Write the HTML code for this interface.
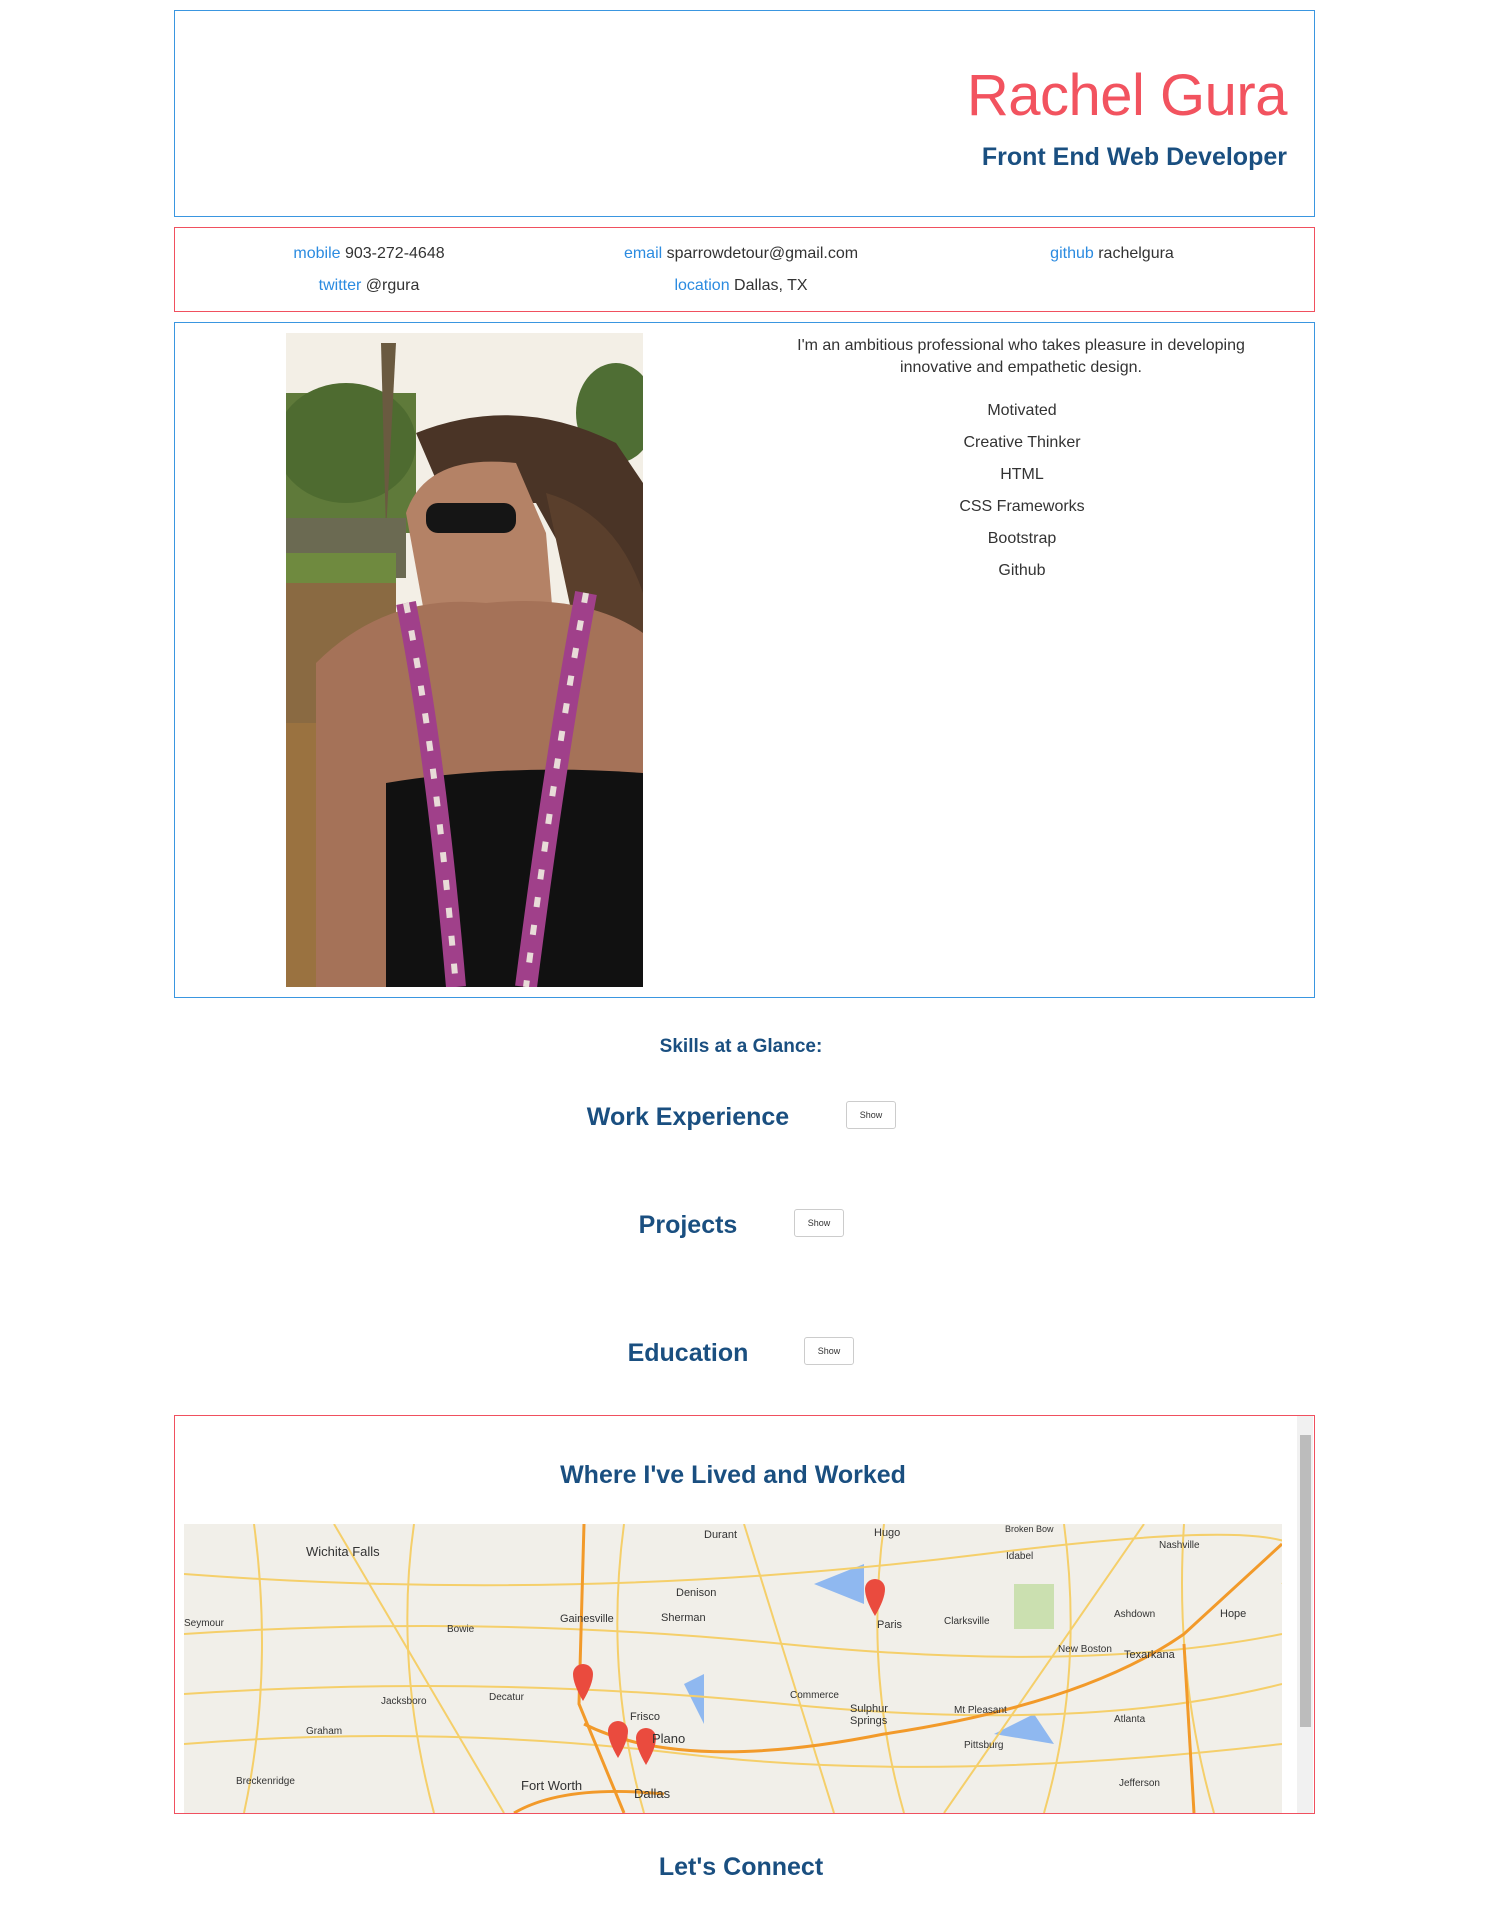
<!DOCTYPE html>
<html><head><meta charset="utf-8"><style>
*{box-sizing:border-box;margin:0;padding:0}
body{width:1487px;height:1918px;background:#fff;font-family:"Liberation Sans",sans-serif;position:relative;overflow:hidden;color:#333}
.abs{position:absolute}
.box{position:absolute;left:174px;width:1141px;border:1px solid #3a96e0}
.red{border-color:#f0505f}
.navy{color:#1a4f80;font-weight:bold}
.lk{color:#2b8be0}
.c{position:absolute;text-align:center;font-size:16px;white-space:nowrap;transform:translateX(-50%)}
.btn{position:absolute;width:50px;height:28px;border:1px solid #ccc;border-radius:3px;font-size:9px;text-align:center;line-height:26px;color:#333;background:#fff}
</style></head><body>
<div class="box" style="top:10px;height:207px"></div>
<div class="abs" style="right:200px;top:62px;font-size:58px;color:#f2535f;letter-spacing:-0.5px">Rachel Gura</div>
<div class="abs navy" style="right:200px;top:143px;font-size:25px">Front End Web Developer</div>

<div class="box red" style="top:227px;height:85px"></div>
<div class="c" style="left:369px;top:245px"><span class="lk">mobile</span> 903-272-4648</div>
<div class="c" style="left:741px;top:245px"><span class="lk">email</span> sparrowdetour@gmail.com</div>
<div class="c" style="left:1112px;top:245px"><span class="lk">github</span> rachelgura</div>
<div class="c" style="left:369px;top:277px"><span class="lk">twitter</span> @rgura</div>
<div class="c" style="left:741px;top:277px"><span class="lk">location</span> Dallas, TX</div>

<div class="box" style="top:322px;height:676px"></div>
<svg class="abs" style="left:286px;top:333px" width="357" height="654" viewBox="0 0 357 654">
<rect width="357" height="654" fill="#f3efe6"/>
<rect x="0" y="60" width="130" height="140" fill="#5f7a3a"/>
<ellipse cx="60" cy="110" rx="70" ry="60" fill="#4e6b30"/>
<ellipse cx="330" cy="80" rx="40" ry="50" fill="#4f6e34"/>
<path d="M95 10 L110 10 L100 200 Z" fill="#6a5a40"/>
<rect x="0" y="185" width="120" height="60" fill="#6b6a52"/>
<rect x="0" y="220" width="110" height="30" fill="#6f8a3f"/>
<rect x="0" y="250" width="110" height="140" fill="#8a6a42"/>
<rect x="0" y="390" width="40" height="264" fill="#9a7240"/>
<path d="M130 100 Q230 60 330 110 L357 150 L357 300 L300 260 L250 170 L160 170 Z" fill="#4a3426"/>
<path d="M120 180 Q140 120 230 130 L260 200 L270 320 L200 330 L140 290 Z" fill="#b48266"/>
<path d="M260 160 Q330 180 357 260 L357 320 L290 300 Z" fill="#5a3f2c"/>
<rect x="140" y="170" width="90" height="30" rx="12" fill="#151515"/>
<path d="M30 330 Q100 260 200 270 Q300 260 357 300 L357 654 L30 654 Z" fill="#a57258"/>
<path d="M100 450 Q220 430 357 440 L357 654 L100 654 Z" fill="#111"/>
<path d="M120 270 Q150 420 170 654" stroke="#a0408a" stroke-width="20" fill="none"/>
<path d="M300 260 Q270 420 240 654" stroke="#a0408a" stroke-width="22" fill="none"/>
<path d="M120 270 Q150 420 170 654" stroke="#e8dcd8" stroke-width="6" stroke-dasharray="10 18" fill="none"/>
<path d="M300 260 Q270 420 240 654" stroke="#e8dcd8" stroke-width="6" stroke-dasharray="10 18" fill="none"/>
</svg>
<div class="c" style="left:1021px;top:335px;font-size:16px;line-height:22px">I'm an ambitious professional who takes pleasure in developing<br>innovative and empathetic design.</div>
<div class="c" style="left:1022px;top:402px">Motivated</div>
<div class="c" style="left:1022px;top:434px">Creative Thinker</div>
<div class="c" style="left:1022px;top:466px">HTML</div>
<div class="c" style="left:1022px;top:498px">CSS Frameworks</div>
<div class="c" style="left:1022px;top:530px">Bootstrap</div>
<div class="c" style="left:1022px;top:562px">Github</div>

<div class="c navy" style="left:741px;top:1036px;font-size:19px">Skills at a Glance:</div>
<div class="c navy" style="left:688px;top:1103px;font-size:25px">Work Experience</div>
<div class="btn" style="left:846px;top:1101px">Show</div>
<div class="c navy" style="left:688px;top:1211px;font-size:25px">Projects</div>
<div class="btn" style="left:794px;top:1209px">Show</div>
<div class="c navy" style="left:688px;top:1339px;font-size:25px">Education</div>
<div class="btn" style="left:804px;top:1337px">Show</div>

<div class="box red" style="top:1415px;height:399px"></div>
<div class="abs" style="left:1297px;top:1416px;width:16px;height:397px;background:#f1f1f1"></div>
<div class="abs" style="left:1300px;top:1435px;width:11px;height:292px;background:#bcbcbc"></div>
<div class="c navy" style="left:733px;top:1461px;font-size:25px">Where I've Lived and Worked</div>
<svg class="abs" style="left:184px;top:1524px" width="1098" height="289" viewBox="0 0 1098 289" font-family="Liberation Sans" font-size="11" fill="#333">
<rect width="1098" height="289" fill="#f1efe9"/>
<path d="M630 60 l50 -20 v40 z M810 210 l40 -20 l20 30 z M500 160 l20 -10 v50 z" fill="#8fb8f0"/>
<rect x="830" y="60" width="40" height="45" fill="#cbe0b0"/>
<g stroke="#f5cf6a" stroke-width="2" fill="none">
<path d="M0 110 Q300 90 600 120 T1098 110"/><path d="M0 220 Q250 200 500 230 T1098 220"/>
<path d="M70 0 Q90 150 60 289"/><path d="M230 0 Q210 140 250 289"/><path d="M440 0 Q420 150 460 289"/>
<path d="M700 0 Q680 150 720 289"/><path d="M880 0 Q900 150 860 289"/><path d="M1000 0 Q990 150 1030 289"/>
<path d="M0 50 Q400 80 800 30 T1098 60"/><path d="M0 170 Q300 150 600 180 T1098 160"/>
<path d="M150 0 L320 289"/><path d="M560 0 L650 289"/><path d="M760 289 L960 0"/>
</g>
<g stroke="#f29a2a" stroke-width="3" fill="none">
<path d="M400 0 L395 180 L440 289"/><path d="M400 200 Q500 250 700 210 Q900 180 1000 110 L1098 20"/>
<path d="M330 289 Q380 260 480 270"/><path d="M1000 120 L1010 289"/>
</g>
<g fill="#ea4b3e"><path d="M399 140 a10 10 0 0 1 10 10 q0 10 -10 27 q-10 -17 -10 -27 a10 10 0 0 1 10 -10z"/>
<path d="M434 197 a10 10 0 0 1 10 10 q0 10 -10 27 q-10 -17 -10 -27 a10 10 0 0 1 10 -10z"/>
<path d="M462 204 a10 10 0 0 1 10 10 q0 10 -10 27 q-10 -17 -10 -27 a10 10 0 0 1 10 -10z"/>
<path d="M691 55 a10 10 0 0 1 10 10 q0 10 -10 27 q-10 -17 -10 -27 a10 10 0 0 1 10 -10z"/></g>
<text x="122" y="32" font-size="13">Wichita Falls</text><text x="520" y="14">Durant</text><text x="690" y="12">Hugo</text>
<text x="492" y="72">Denison</text><text x="376" y="98">Gainesville</text><text x="477" y="97">Sherman</text>
<text x="0" y="102" font-size="10">Seymour</text><text x="263" y="108" font-size="10">Bowie</text><text x="693" y="104">Paris</text>
<text x="760" y="100" font-size="10">Clarksville</text><text x="930" y="93" font-size="10">Ashdown</text><text x="1036" y="93">Hope</text>
<text x="940" y="134">Texarkana</text><text x="874" y="128" font-size="10">New Boston</text><text x="606" y="174" font-size="10">Commerce</text>
<text x="666" y="188">Sulphur</text><text x="666" y="200">Springs</text><text x="770" y="189" font-size="10">Mt Pleasant</text>
<text x="305" y="176" font-size="10">Decatur</text><text x="197" y="180" font-size="10">Jacksboro</text><text x="122" y="210" font-size="10">Graham</text>
<text x="446" y="196">Frisco</text><text x="468" y="219" font-size="13">Plano</text><text x="337" y="266" font-size="13">Fort Worth</text>
<text x="450" y="274" font-size="13">Dallas</text><text x="52" y="260" font-size="10">Breckenridge</text><text x="975" y="24" font-size="10">Nashville</text>
<text x="822" y="35" font-size="10">Idabel</text><text x="821" y="8" font-size="9">Broken Bow</text><text x="780" y="224" font-size="10">Pittsburg</text>
<text x="930" y="198" font-size="10">Atlanta</text><text x="935" y="262" font-size="10">Jefferson</text>
</svg>
<div class="c navy" style="left:741px;top:1853px;font-size:25px">Let's Connect</div>
</body></html>
